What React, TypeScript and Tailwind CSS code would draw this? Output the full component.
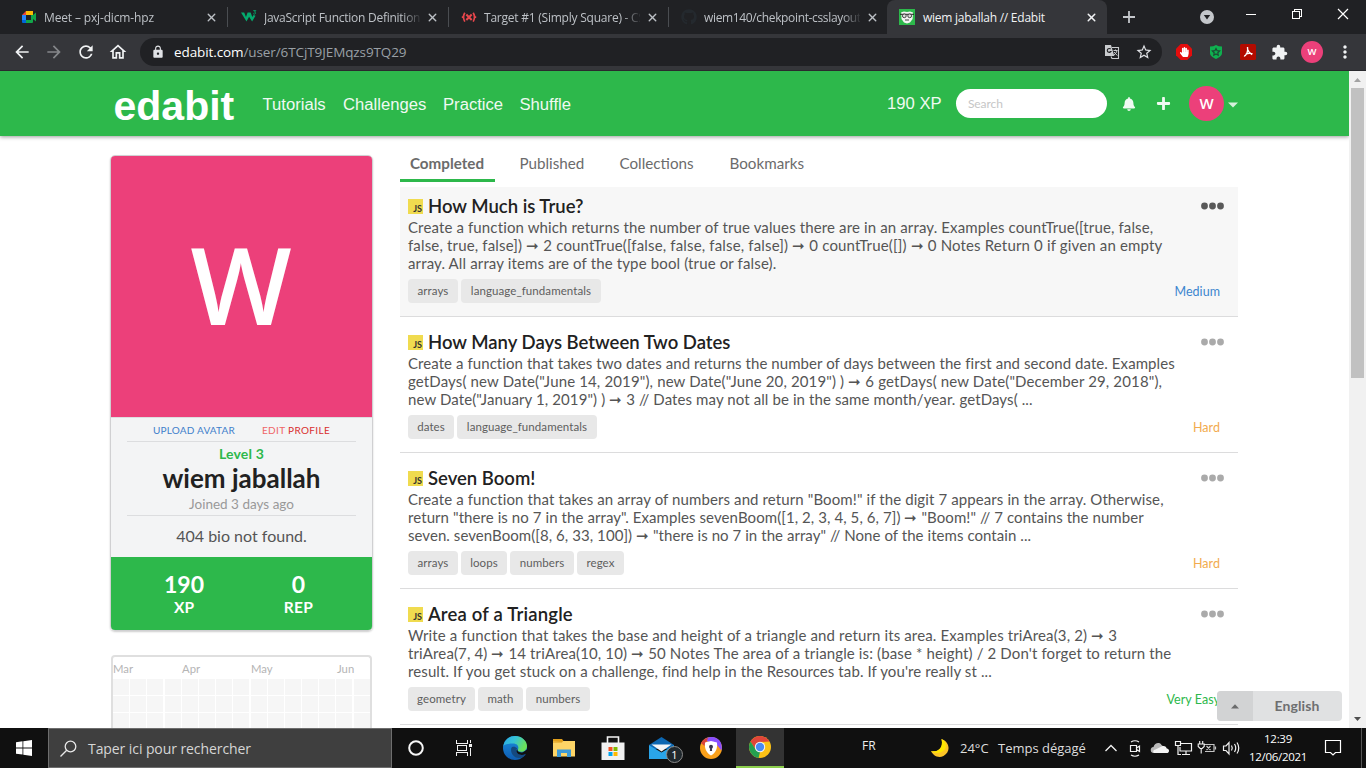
import React from "react";
import { X } from "lucide-react";
import {
  MdArrowBack,
  MdArrowForward,
  MdRefresh,
  MdOutlineHome,
  MdLock,
  MdStarOutline,
  MdExtension,
  MdMoreVert,
} from "react-icons/md";
import { FaBell, FaPlus, FaGithub, FaHandPaper } from "react-icons/fa";

const ui = "font-['Open_Sans','Noto_Sans',sans-serif]";
const lato = "font-[Lato,sans-serif]";
const arial = "font-['Liberation_Sans',Arial,sans-serif]";

/* ---------- favicons ---------- */

const MeetIcon = () => (
  <svg width="16" height="16" viewBox="0 0 16 16">
    <path d="M1 6 5 2v4Z" fill="#ea4335" />
    <path d="M5 2h7v4H5Z" fill="#fbbc04" />
    <path d="M1 6h4v5H1Z" fill="#2684fc" />
    <path d="M1 11h4v3H2a1 1 0 0 1-1-1Z" fill="#0066da" />
    <path d="M5 11h5V6h2l3-2.500v9L12 10v3a1 1 0 0 1-1 1H5Z" fill="#12a64a" />
    <path d="M5 6h5v5H5Z" fill="#202124" />
  </svg>
);

const W3Icon = () => (
  <svg width="16" height="16" viewBox="0 0 16 16">
    <path d="M0 3.500h3.200L5 8l1.600-4.500h3L11.300 8 12.500 6l2 .8-3.400 5.700L8.100 7.700l-2.600 4.800Z" fill="#04aa6d" />
    <path d="M12.300 1.600h2.500l-1.300 1.500c1.500 0 1.500 2-.2 2l-1.100-.4" fill="none" stroke="#04aa6d" strokeWidth=".9" />
  </svg>
);

const BattleIcon = () => (
  <svg width="16" height="16" viewBox="0 0 16 16" fill="none" stroke="#e8474c" strokeWidth="1.700">
    <path d="M3.800 3.800Q1.200 8.200 3.800 12.600M12.200 3.800q2.600 4.400 0 8.800" />
    <path d="M2.200 8.200H.8M13.800 8.200h1.400" />
    <path d="m5.300 5.500 5.400 5.400m0-5.400-5.400 5.400" strokeWidth="2.100" />
  </svg>
);

const EdabitIcon = () => (
  <svg width="16" height="16" viewBox="0 0 16 16">
    <path d="M0 0h16v16H0Z" fill="#2db84b" />
    <path d="M2.200 3.200 5 2.400l3 .6 3-.6 3 1-.4 6.600L11 13.400 8 14.400 5 13.400 2.500 10Z" fill="#f4f4f4" />
    <path d="M1 5.300h14" stroke="#222" strokeWidth="1" />
    <circle cx="5.300" cy="6.800" r="1.900" fill="#ddd" stroke="#333" strokeWidth=".9" />
    <circle cx="10.700" cy="6.800" r="1.900" fill="#ddd" stroke="#333" strokeWidth=".9" />
    <path d="M6 11h4" stroke="#444" strokeWidth="1" />
  </svg>
);

/* ---------- browser chrome ---------- */

function Tab({ icon, title, cls, last }: { icon: React.ReactNode; title: string; cls: string; last?: boolean }) {
  return (
    <div className={`flex h-[34px] w-[220px] shrink-0 items-center pl-[13px] ${ui}`}>
      <span className="flex w-[23px] shrink-0">{icon}</span>
      <span
        className={`w-[156px] whitespace-nowrap text-[12px] leading-[17px] text-[#bdc1c6] [mask-image:linear-gradient(to_right,black_138px,transparent_158px)] ${cls}`}
      >
        {title}
      </span>
      <X size={13} strokeWidth={2.600} className="ml-[6px] shrink-0 text-[#bdc1c6]" />
      {!last && <span className="ml-[9px] h-[20px] w-px shrink-0 bg-[#4a4d51]" />}
    </div>
  );
}

function TabStrip() {
  return (
    <div className="flex h-[34px] shrink-0 bg-[#202124]">
      <div className="flex w-[887px] shrink-0 pl-[8px]">
        <Tab icon={<MeetIcon />} title="Meet – pxj-dicm-hpz" cls="tracking-[-0.150px]" />
        <Tab icon={<W3Icon />} title="JavaScript Function Definition" cls="tracking-[-0.260px]" />
        <Tab icon={<BattleIcon />} title="Target #1 (Simply Square) - CS" cls="tracking-[-0.230px]" />
        <Tab icon={<FaGithub size={16} color="#24292e" />} title="wiem140/chekpoint-csslayout" cls="tracking-[-0.350px]" last />
      </div>
      <div className={`flex w-[220px] shrink-0 items-center rounded-t-[8px] bg-[#35363a] pl-[12px] ${ui}`}>
        <EdabitIcon />
        <span className="ml-[8px] w-[154px] whitespace-nowrap text-[12px] leading-[17px] tracking-[-0.250px] text-[#f1f3f4]">
          wiem jaballah // Edabit
        </span>
        <X size={13} strokeWidth={2.800} className="ml-[8px] text-[#f1f3f4]" />
      </div>
      <div className="flex grow items-center">
        <svg width="12" height="12" viewBox="0 0 12 12" className="ml-[16px]">
          <path d="M6 0v12M0 6h12" stroke="#c4c7cb" strokeWidth="1.800" />
        </svg>
        <svg width="14" height="14" viewBox="0 0 14 14" className="ml-[65px]">
          <circle cx="7" cy="7" r="7" fill="#c4c7cb" />
          <path d="M3.800 5h6.400L7 9.600Z" fill="#202124" />
        </svg>
        <svg width="104" height="12" viewBox="0 0 104 12" className="mb-[6px] ml-[32px]" fill="none" stroke="#fff" shapeRendering="crispEdges">
          <path d="M0 6.500h10" />
          <path d="M46.500 3.500h7v7h-7zM48.500 3.500v-2h7v7h-2" />
          <path d="m92 1 10 10m0-10-10 10" shapeRendering="auto" strokeWidth="1.200" />
        </svg>
      </div>
    </div>
  );
}

function Toolbar() {
  return (
    <div className={`flex h-[37px] shrink-0 items-center border-b border-[#2a2a2e] bg-[#35363a] ${ui}`}>
      <MdArrowBack size={20} color="#f1f3f4" className="ml-[12px]" />
      <MdArrowForward size={20} color="#85878a" className="ml-[12px]" />
      <MdRefresh size={20} color="#f1f3f4" className="ml-[12px]" />
      <MdOutlineHome size={20} color="#f1f3f4" className="ml-[12px]" />
      <div className="ml-[12px] flex h-[28px] w-[1022px] shrink-0 items-center rounded-full bg-[#202124]">
        <MdLock size={14} color="#e0e2e5" className="ml-[11px]" />
        <span className="ml-[9px] w-[920px] shrink-0 whitespace-nowrap text-[13.500px] leading-[20px] tracking-[-0.100px] text-[#9aa0a6]">
          <span className="text-white">edabit.com</span>/user/6TCjT9JEMqzs9TQ29
        </span>
        <svg width="16" height="16" viewBox="0 0 16 16" className="ml-[10px] shrink-0">
          <path d="M1 1h6l3.300 11H1Z" fill="#c9cbce" />
          <path d="M8 3.500h6.500v11H8L7 12.500" fill="none" stroke="#c9cbce" strokeWidth="1.100" />
          <path d="M6.700 5a2 2 0 1 0 .3 2.500H5.500" fill="none" stroke="#202124" strokeWidth="1.100" />
          <path d="M9.500 6.500h4M11.500 5.500v1m1.500 0c-.4 2-1.700 3.500-3 4.500m0-3 3.300 3.500" fill="none" stroke="#c9cbce" />
        </svg>
        <MdStarOutline size={18} color="#dfe1e5" className="ml-[15px] shrink-0" />
      </div>
      <svg width="16" height="16" viewBox="0 0 16 16" className="ml-[14px]">
        <path d="M4.700 0h6.600L16 4.700v6.600L11.300 16H4.700L0 11.300V4.700Z" fill="#e40d0d" />
        <g transform="translate(3.300 3)">
          <FaHandPaper size={10} color="#fff" />
        </g>
      </svg>
      <svg width="14" height="16" viewBox="0 0 14 16" className="ml-[17px]">
        <path d="M1 2.500q3.500 0 6-1.500 2.500 1.500 6 1.500V9c0 3-3 4.500-6 6-3-1.500-6-3-6-6Z" fill="#0fb04f" />
        <path d="m7 4.500 1.100 2.200 2.500.3-1.800 1.700.4 2.500L7 10l-2.200 1.200.4-2.500L3.400 7l2.500-.3Z" fill="none" stroke="#1c4a35" strokeWidth="1.200" />
      </svg>
      <svg width="16" height="16" viewBox="0 0 16 16" className="ml-[17px]">
        <rect width="16" height="16" rx="1.500" fill="#b30b00" />
        <path d="M7.500 3c.5 3 .5 4-.5 6-1 2-2 3.300-3 3M5.500 10.300c2-1 4-1.300 7-.6M7.600 5.500c.6 2 2 3.700 4.600 5" fill="none" stroke="#fff" strokeWidth="1.400" />
      </svg>
      <MdExtension size={17} color="#f1f3f4" className="ml-[15px]" />
      <span className="ml-[13px] flex h-[22px] w-[22px] items-center justify-center rounded-full bg-[#ec407a] text-[9.500px] font-semibold leading-none text-white">
        W
      </span>
      <MdMoreVert size={20} color="#f1f3f4" className="ml-[12px]" />
    </div>
  );
}

/* ---------- site ---------- */

function SiteNav() {
  return (
    <header className={`z-10 flex h-[65px] shrink-0 items-center bg-[#2db84b] pl-[113.500px] shadow-[0_1px_4px_rgba(0,0,0,0.4)] ${arial}`}>
      <span className="mt-[5px] w-[149px] text-[41px] font-bold leading-[48px] text-white">edabit</span>
      <nav className="flex w-[624.500px] pt-[2px] text-[16.650px] leading-[20px] text-[#f0faf2]">
        <span className="w-[80.500px]">Tutorials</span>
        <span className="w-[100px]">Challenges</span>
        <span className="w-[76.500px]">Practice</span>
        <span>Shuffle</span>
      </nav>
      <span className="w-[69px] pt-[1px] text-[16.650px] leading-[20px] text-[#f0faf2]">190 XP</span>
      <span className={`flex h-[29px] w-[151px] items-center rounded-full bg-white pl-[12px] text-[12px] tracking-[-0.100px] text-[#c6c6c6] ${lato}`}>Search</span>
      <FaBell size={14} color="#f0faf2" className="ml-[15px]" />
      <FaPlus size={15} color="#f0faf2" className="ml-[20px]" />
      <span className="ml-[18px] flex h-[35px] w-[35px] items-center justify-center rounded-full bg-[#ec407a] font-['Open_Sans',sans-serif] text-[15px] font-semibold leading-none text-white">
        W
      </span>
      <svg width="10" height="6" viewBox="0 0 10 6" className="ml-[4px] mt-[2px]">
        <path d="M0 .5h10L5 5.500Z" fill="#d5f1db" />
      </svg>
    </header>
  );
}

function ProfileCard() {
  return (
    <section className={`flex h-[476px] w-[263px] shrink-0 flex-col overflow-hidden rounded-[5px] border border-[#d0d0d2] text-center shadow-[0_1px_2px_rgba(0,0,0,0.2)] ${lato}`}>
      <div className="flex h-[261px] shrink-0 items-center justify-center bg-[#ec407a] font-['Open_Sans',sans-serif] text-[107px] font-[650] leading-none text-white">
        <span className="mb-[6px] mr-[1px] blur-[0.700px]">W</span>
      </div>
      <div className="flex h-[140px] shrink-0 flex-col border-t border-[#dddee0] bg-[#f3f4f5] px-[16px]">
        <div className="flex h-[24px] items-center border-b border-[#dcdddf] text-[10px] leading-[14px]">
          <span className="w-[134px] tracking-[0.200px] text-[#3f7fcb]">UPLOAD AVATAR</span>
          <span className="w-[70px] whitespace-nowrap tracking-[0.350px] text-[#d92f2f]"><span className="text-[#ef6565]">EDIT</span> PROFILE</span>
        </div>
        <div className="mt-[4px] text-[14px] font-bold leading-[16px] tracking-[0.200px] text-[#2db84b]">Level 3</div>
        <div className="text-[26px] font-bold leading-[32px] text-[#212121]">wiem jaballah</div>
        <div className="h-[22px] border-b border-[#dcdddf] text-[13.500px] leading-[20px] text-[#999]">Joined 3 days ago</div>
        <div className="mt-[9px] text-[16px] leading-[22px] text-[#555]">404 bio not found.</div>
      </div>
      <div className="flex grow bg-[#2db84b] pl-[16px] pt-[14px] font-bold text-white">
        <div className="w-[114px]">
          <div className="text-[23px] leading-[26px]">190</div>
          <div className="pt-px text-[15.500px] leading-[18px]">XP</div>
        </div>
        <div className="w-[115px]">
          <div className="text-[23px] leading-[26px]">0</div>
          <div className="pt-px text-[15.500px] leading-[18px] tracking-[0.300px]">REP</div>
        </div>
      </div>
    </section>
  );
}

function ActivityCard() {
  return (
    <section className={`ml-[1px] mt-[24px] w-[261px] shrink-0 overflow-hidden rounded-t-[4px] border-2 border-b-0 border-[#dfdfdf] ${lato}`}>
      <div className="flex h-[22px] pt-[5px] text-[11.300px] leading-[14px] text-[#b5b5b5]">
        <span className="w-[69px]">Mar</span>
        <span className="w-[69px]">Apr</span>
        <span className="w-[86px]">May</span>
        <span>Jun</span>
      </div>
      <div className="grid auto-rows-[16px] grid-cols-[repeat(15,16px)] gap-[1.200px]">
        {Array.from({ length: 60 }, (_, i) => (
          <span key={i} className="bg-[#f6f6f6]" />
        ))}
      </div>
    </section>
  );
}

type Challenge = {
  title: string;
  titleCls: string;
  lines: [string, string][];
  tags: [string, string][];
  level: string;
  levelCls: string;
  active?: boolean;
};

const challenges: Challenge[] = [
  {
    title: "How Much is True?",
    titleCls: "tracking-normal",
    lines: [
      ["Create a function which returns the number of true values there are in an array. Examples countTrue([true, false,", "tracking-[0.130px]"],
      ["false, true, false]) ➞ 2 countTrue([false, false, false, false]) ➞ 0 countTrue([]) ➞ 0 Notes Return 0 if given an empty", "tracking-[0.160px]"],
      ["array. All array items are of the type bool (true or false).", "tracking-[0.140px]"],
    ],
    tags: [["arrays", "w-[50px]"], ["language_fundamentals", "w-[140px]"]],
    level: "Medium",
    levelCls: "text-[#3d86cf]",
    active: true,
  },
  {
    title: "How Many Days Between Two Dates",
    titleCls: "tracking-normal",
    lines: [
      ["Create a function that takes two dates and returns the number of days between the first and second date. Examples", "tracking-[0.070px]"],
      ['getDays( new Date("June 14, 2019"), new Date("June 20, 2019") ) ➞ 6 getDays( new Date("December 29, 2018"),', "tracking-[0.140px]"],
      ['new Date("January 1, 2019") ) ➞ 3 // Dates may not all be in the same month/year. getDays( ...', "tracking-[0.100px]"],
    ],
    tags: [["dates", "w-[46px]"], ["language_fundamentals", "w-[140px]"]],
    level: "Hard",
    levelCls: "text-[#f2ab4e]",
  },
  {
    title: "Seven Boom!",
    titleCls: "tracking-normal",
    lines: [
      ['Create a function that takes an array of numbers and return "Boom!" if the digit 7 appears in the array. Otherwise,', "tracking-[0.105px]"],
      ['return "there is no 7 in the array". Examples sevenBoom([1, 2, 3, 4, 5, 6, 7]) ➞ "Boom!" // 7 contains the number', "tracking-[0.080px]"],
      ['seven. sevenBoom([8, 6, 33, 100]) ➞ "there is no 7 in the array" // None of the items contain ...', "tracking-[0.060px]"],
    ],
    tags: [["arrays", "w-[50px]"], ["loops", "w-[46px]"], ["numbers", "w-[64px]"], ["regex", "w-[47px]"]],
    level: "Hard",
    levelCls: "text-[#f2ab4e]",
  },
  {
    title: "Area of a Triangle",
    titleCls: "tracking-[0.180px]",
    lines: [
      ["Write a function that takes the base and height of a triangle and return its area. Examples triArea(3, 2) ➞ 3", "tracking-[0.130px]"],
      ["triArea(7, 4) ➞ 14 triArea(10, 10) ➞ 50 Notes The area of a triangle is: (base * height) / 2 Don't forget to return the", "tracking-[0.130px]"],
      ["result. If you get stuck on a challenge, find help in the Resources tab. If you're really st ...", "tracking-[0.105px]"],
    ],
    tags: [["geometry", "w-[67px]"], ["math", "w-[45px]"], ["numbers", "w-[64px]"]],
    level: "Very Easy",
    levelCls: "text-[#2db84b]",
  },
];

function ChallengeRow({ c }: { c: Challenge }) {
  return (
    <article className={`mb-[6px] h-[130px] shrink-0 border-b border-[#dcdcdd] pl-[8px] pr-[14px] pt-[6px] ${c.active ? "bg-[#f7f7f7]" : ""}`}>
      <div className="flex h-[25px] items-center">
        <span className="mt-[2px] flex h-[15px] w-[15px] items-end justify-end bg-[#f0db4f] pr-[1px] text-[9px] font-bold leading-[10px] text-[#323330]">
          JS
        </span>
        <h2 className={`ml-[5px] mt-[2px] grow text-[18.500px] font-semibold leading-[25px] text-[#212121] ${c.titleCls}`}>{c.title}</h2>
        <svg width="23" height="8" viewBox="0 0 23 8" className={c.active ? "text-[#595959]" : "text-[#aaa]"} fill="currentColor">
          <circle cx="3.500" cy="4" r="3.400" />
          <circle cx="11.500" cy="4" r="3.400" />
          <circle cx="19.500" cy="4" r="3.400" />
        </svg>
      </div>
      <div className="text-[15px] leading-[18px] text-[#555]">
        {c.lines.map(([text, spacing]) => (
          <p key={text} className={`whitespace-nowrap ${spacing}`}>
            {text}
          </p>
        ))}
      </div>
      <div className="mt-[7px] flex items-center gap-[3px] pr-[4px]">
        {c.tags.map(([t, w]) => (
          <span key={t} className={`flex h-[24px] items-center justify-center rounded-[4px] bg-[#e8e8e8] text-[11.500px] leading-[14px] tracking-[0.080px] text-[#5e5e5e] ${w}`}>
            {t}
          </span>
        ))}
        <span className={`ml-auto pt-[2px] text-[12.500px] leading-[16px] tracking-[0.050px] ${c.levelCls}`}>{c.level}</span>
      </div>
    </article>
  );
}

function Challenges() {
  return (
    <main className={`ml-[27px] flex w-[838px] flex-col ${lato}`}>
      <div className="mb-[5px] flex h-[31px] shrink-0 text-[15.200px] leading-[20px] text-[#6b6b6b]">
        <span className="mr-[24.500px] h-[31px] w-[95px] border-b-[3px] border-[#2db84b] pr-[1px] pt-[2px] text-center font-bold">Completed</span>
        <span className="w-[100px] pt-[2px]">Published</span>
        <span className="w-[110px] pt-[2px]">Collections</span>
        <span className="pt-[2px]">Bookmarks</span>
      </div>
      {challenges.map((c) => (
        <ChallengeRow key={c.title} c={c} />
      ))}
    </main>
  );
}

function Scrollbar() {
  return (
    <div className="flex h-[657px] w-[17px] flex-col items-center bg-[#f1f1f1]">
      <svg width="17" height="17" viewBox="0 0 17 17">
        <path d="M5 11h7L8.500 7Z" fill="#a3a3a3" />
      </svg>
      <div className="h-[290px] w-[13px] bg-[#c1c1c1]" />
      <svg width="17" height="17" viewBox="0 0 17 17" className="mt-auto">
        <path d="M5 6h7l-3.500 4Z" fill="#505050" />
      </svg>
    </div>
  );
}

/* ---------- taskbar ---------- */

const EdgeIcon = () => (
  <svg width="24" height="24" viewBox="0 0 24 24">
    <defs>
      <linearGradient id="edgeTop" x1="0" y1="0" x2="1" y2=".4">
        <stop offset="0" stopColor="#2aa8e8" />
        <stop offset=".5" stopColor="#36c3d5" />
        <stop offset="1" stopColor="#6be05a" />
      </linearGradient>
      <linearGradient id="edgeLow" x1="0" y1="0" x2="0" y2="1">
        <stop offset="0" stopColor="#1b8fe0" />
        <stop offset="1" stopColor="#0f5cb0" />
      </linearGradient>
    </defs>
    <circle cx="12" cy="12" r="12" fill="url(#edgeLow)" />
    <path d="M.3 10C1.500 4 6 0 12 0c7 0 12 5 12 10 0 3.500-2.500 5.800-5.800 5.800-2.500 0-4.200-1-3.200-2.600 1-2 0-5.700-5-5.700C5.500 7.500 1 8.500.3 10Z" fill="url(#edgeTop)" />
    <path d="M8.300 12c-1.500 5.500 3.500 11.500 10.200 9.700 2-.6 4-2.400 4.500-3.700-4 2-9.500.7-9.500-3.500 0-1.500.7-2 .7-2-2-2.500-5-2.300-5.900-.5Z" fill="#15497f" />
    <path d="M15 13c-1.500 2 1 4 5 3.200l4-2.700v4l-1.500.5c-4 2-9.300.5-9-3.500Z" fill="#101010" />
  </svg>
);

const FolderIcon = () => (
  <svg width="22" height="18" viewBox="0 0 22 18">
    <path d="M0 0h9l1.500 2H0Z" fill="#e2a01c" />
    <path d="M0 2h22v15.500H0Z" fill="#fdd567" />
    <path d="M0 2.500 10 2l-1 1.500H0Z" fill="#dc9b1a" />
    <path d="M4 10.500h14v7.500h-4v-4H8v4H4Z" fill="#3d9ad6" />
  </svg>
);

const StoreIcon = () => (
  <svg width="24" height="24" viewBox="0 0 24 24">
    <path d="M6.500 7V1h11v6" fill="none" stroke="#f4f4f4" strokeWidth="1.600" />
    <path d="M.5 6.500h23V24H.5Z" fill="#f1f1f1" />
    <path d="M7.500 11h4v4h-4Z" fill="#f25022" />
    <path d="M12.500 11h4v4h-4Z" fill="#7fba00" />
    <path d="M7.500 16h4v4h-4Z" fill="#00a4ef" />
    <path d="M12.500 16h4v4h-4Z" fill="#ffb900" />
  </svg>
);

const MailIcon = () => (
  <svg width="25" height="22" viewBox="0 0 25 22">
    <path d="M0 8 12.500 0 25 8v4H0Z" fill="#0c67b2" />
    <path d="M0 8.200 12.500 15.500 25 8.200V22H0Z" fill="#2aa5ea" />
    <path d="M2.500 7.500h20l-10 7Z" fill="#f3f5f7" />
  </svg>
);

const SecureIcon = () => (
  <svg width="22" height="22" viewBox="0 0 22 22">
    <circle cx="11" cy="11" r="11" fill="#f9a01b" />
    <path d="M4 3C8-1.500 18-1 21 6c1 3 1 5 .5 7.500L17 8 9 5Z" fill="#8a4fff" />
    <path d="M1 6c1-2 4-5 7-5L6 6 4.500 9Z" fill="#d8433a" />
    <path d="M5 5.500 11 4l6 1.500c.7 6-1.300 10.500-6 13-4.700-2.500-6.700-7-6-13Z" fill="#fff" />
    <circle cx="11" cy="9.700" r="2" fill="#3a3550" />
    <path d="M10.200 10h1.600l.3 4H9.900Z" fill="#3a3550" />
  </svg>
);

const ChromeIcon = () => (
  <svg width="22" height="22" viewBox="0 0 22 22">
    <circle cx="11" cy="11" r="11" fill="#fbc116" />
    <path d="M1.500 5.500A11 11 0 0 1 20.500 5.500L11 6 6.500 13.500Z" fill="#e0453a" />
    <path d="M1.500 5.500 6.700 13.500 11 16l-1.500 5.900A11 11 0 0 1 1.500 5.500Z" fill="#249f50" />
    <circle cx="11" cy="11" r="5.200" fill="#f5f5f5" />
    <circle cx="11" cy="11" r="4.200" fill="#4a8af4" />
  </svg>
);

const TrayIcons = () => (
  <svg width="142" height="24" viewBox="0 0 142 24" fill="none" stroke="#f2f2f2" strokeWidth="1.200">
    <path d="m5.500 15 5.500-5.500 5.500 5.500" strokeWidth="1.300" />
    <path d="M30.500 9.500h6v6h-6zM36.500 12l3-2v5.500l-3-2M31 6q4-2.500 8 0M31 19q4 2.500 8 0" />
    <path d="M54 17a3 3 0 0 1-.5-6C54.500 6.500 60 6 61.500 9l7 5.500-1 2.500Z" fill="#b9b9b9" stroke="none" />
    <path d="M54 17c-1.500-1-1-3 1.500-3.500l7-3.500c2.500-.5 4 1 4.200 2.500 3 .5 3 4 .5 4.500Z" fill="#f4f4f4" stroke="none" />
    <path d="M81 7.500h10.500v7.500H80V11M86 15v3M82 18.500h8M75.500 5.500h5v4h-5zM78 9.500v9h3" />
    <path d="M104 8.500h10v7h-9M115.500 10.500v3M106.500 10l4 4m0-4-4 4" stroke="#c4c4c4" />
    <path d="M99.700 5v3m3-3v3M98.200 8h6v2.500l-2 2h-2l-2-2ZM101.200 12.500v5" strokeWidth="1.100" />
    <path d="M123.500 10v4.500h2.500l3 3.500V6.500l-3 3.500ZM131.500 9.500q1.500 2.500 0 5M134.500 8q2.500 4 0 8M137 6.500q3.500 5.500 0 11" />
  </svg>
);

function Taskbar() {
  return (
    <footer className={`flex h-[40px] shrink-0 items-center bg-[#101010] ${ui}`}>
      <div className="flex w-[48px] justify-center">
        <svg width="16" height="16" viewBox="0 0 16 16" fill="#fff">
          <path d="m0 2.200 6.500-.9v6.200H0ZM7.300 1.200 16 0v7.500H7.300ZM0 8.400h6.500v6.200L0 13.700ZM7.300 8.400H16V16l-8.700-1.200Z" />
        </svg>
      </div>
      <div className="flex h-[40px] w-[344px] items-center border border-[#6d6d6d] bg-[#3f3f3f]">
        <svg width="17" height="17" viewBox="0 0 17 17" className="ml-[11px]" fill="none" stroke="#e8e8e8" strokeWidth="1.300">
          <circle cx="10.500" cy="6.500" r="5.300" />
          <path d="M6.700 10.300.5 16.500" />
        </svg>
        <span className="ml-[11px] whitespace-nowrap pt-[1px] text-[14px] leading-[20px] tracking-[-0.080px] text-[#d6d6d6]">Taper ici pour rechercher</span>
      </div>
      <div className="flex w-[48px] justify-center">
        <svg width="16" height="16" viewBox="0 0 16 16">
          <circle cx="8" cy="8" r="6.800" fill="none" stroke="#f6f6f6" strokeWidth="2" />
        </svg>
      </div>
      <div className="flex w-[48px] justify-center">
        <svg width="17" height="16" viewBox="0 0 17 16" fill="none" stroke="#f0f0f0" shapeRendering="crispEdges">
          <path d="M.5 0v3.500h11V0M.5 16v-3.500h11V16M1.500 5.500h9v5h-9zM14.500 0v3M14.500 8v8" />
          <path d="M13 4h3v3h-3z" fill="#f0f0f0" stroke="none" />
        </svg>
      </div>
      <div className="ml-[2px] flex w-[49px] justify-center"><EdgeIcon /></div>
      <div className="flex w-[49px] justify-center"><FolderIcon /></div>
      <div className="flex w-[49px] justify-center pb-[1px]"><StoreIcon /></div>
      <div className="relative flex w-[49px] justify-center">
        <MailIcon />
        <span className="absolute left-[29px] top-[9px] flex h-[17px] w-[17px] items-center justify-center rounded-full border border-[#8a8a8a] bg-[#20282d] text-[11px] leading-none text-white">
          1
        </span>
      </div>
      <div className="flex w-[50px] justify-center"><SecureIcon /></div>
      <div className="flex h-[40px] w-[48px] items-center justify-center border-b-2 border-[#8ccf4d] bg-[#333]"><ChromeIcon /></div>
      <span className="ml-[78px] w-[68px] pb-[4px] text-[12px] leading-[16px] text-[#eee]">FR</span>
      <svg width="20" height="20" viewBox="0 0 20 20">
        <path d="M11.500 1C20 4 21 14 13.500 18 8 20.500 3 17.500 1 13c5 1.500 13-1.500 10.500-12Z" fill="#fdc526" />
        <path d="M11.500 1C16 3 17 8 15 11c-3 4.500-10 5-14 2 5 1.500 13-1.500 10.500-12Z" fill="#ffe600" />
      </svg>
      <span className="ml-[10px] w-[38px] whitespace-nowrap text-[13px] leading-[18px] text-[#dedede]">24°C</span>
      <span className="w-[102px] whitespace-nowrap text-[13px] leading-[18px] text-[#dedede]">Temps dégagé</span>
      <TrayIcons />
      <div className="w-[72px] whitespace-nowrap text-center text-[11.500px] leading-[18px] tracking-[-0.300px] text-white">
        <div>12:39</div>
        <div>12/06/2021</div>
      </div>
      <svg width="18" height="18" viewBox="0 0 18 18" className="ml-[10px]" fill="none" stroke="#fff" strokeWidth="1.200">
        <path d="M1.500 1.500h15v12h-5L9 16l-2.500-2.500h-5Z" />
      </svg>
      <span className="ml-auto mr-[4px] h-[40px] w-px bg-[#555]" />
    </footer>
  );
}

export default function App() {
  return (
    <div className="flex h-[768px] w-[1366px] flex-col overflow-hidden bg-white">
      <TabStrip />
      <Toolbar />
      <div className="relative flex h-[657px] shrink-0">
        <div className="flex w-[1349px] flex-col overflow-hidden">
          <SiteNav />
          <div className="flex grow overflow-hidden pl-[110px]">
            <div className="flex w-[263px] shrink-0 flex-col pt-[19px]">
              <ProfileCard />
              <ActivityCard />
            </div>
            <div className="pt-[15px]">
              <Challenges />
            </div>
          </div>
        </div>
        <Scrollbar />
        <div className={`absolute left-[1217px] top-[620px] z-20 flex h-[30px] w-[125px] overflow-hidden rounded-[4px] bg-[#e0e1e2] text-[14px] font-bold text-[#6e6f70] ${lato}`}>
          <span className="flex w-[36px] items-center justify-center bg-[#d2d3d4]">
            <svg width="8" height="5" viewBox="0 0 8 5">
              <path d="M0 4.500h8L4 .3Z" fill="#6a6b6c" />
            </svg>
          </span>
          <span className="flex grow items-center justify-center pb-[1px] pr-[1px] tracking-[0.100px]">English</span>
        </div>
      </div>
      <Taskbar />
    </div>
  );
}
